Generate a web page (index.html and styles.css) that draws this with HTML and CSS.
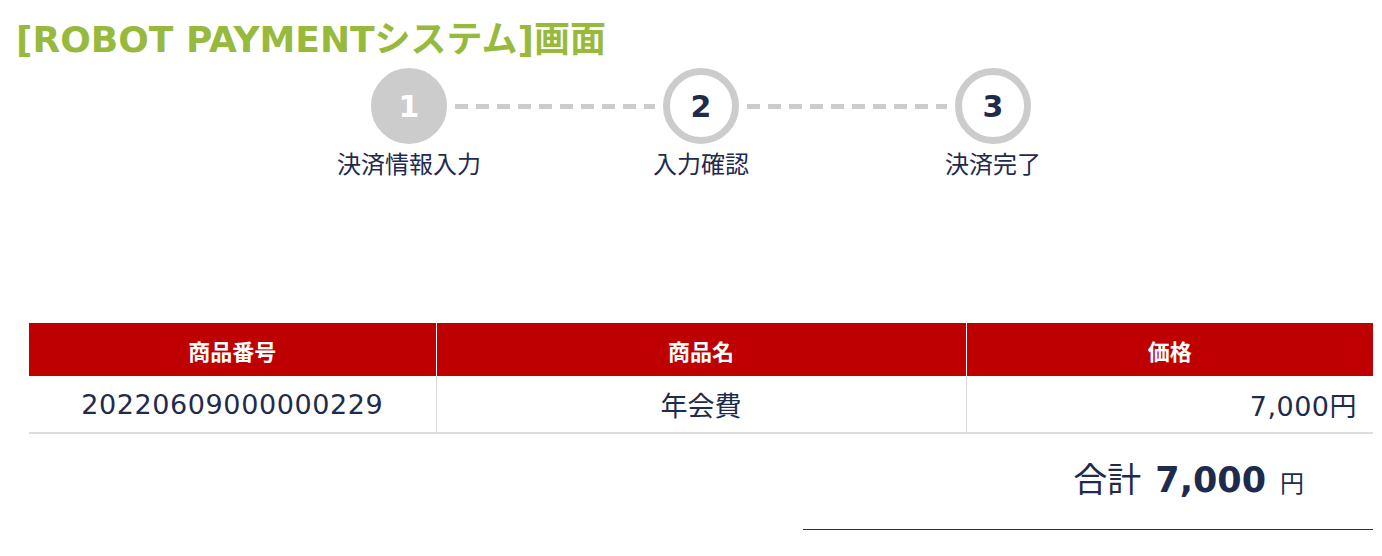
FILE: index.html
```html
<!DOCTYPE html>
<html lang="ja">
<head>
<meta charset="utf-8">
<title>[ROBOT PAYMENTシステム]画面</title>
<link rel="stylesheet" href="styles.css">
</head>
<body>
<h1 class="title">[ROBOT PAYMENTシステム]画面</h1>
<main class="content">
  <ol class="steps">
    <li class="step step--current"><span class="step__num">1</span><span class="step__label">決済情報入力</span></li>
    <li class="step__line" aria-hidden="true"></li>
    <li class="step"><span class="step__num">2</span><span class="step__label">入力確認</span></li>
    <li class="step__line" aria-hidden="true"></li>
    <li class="step"><span class="step__num">3</span><span class="step__label">決済完了</span></li>
  </ol>

  <table class="items">
    <colgroup>
      <col class="items__col-id">
      <col class="items__col-name">
      <col class="items__col-price">
    </colgroup>
    <thead>
      <tr><th>商品番号</th><th>商品名</th><th>価格</th></tr>
    </thead>
    <tbody>
      <tr>
        <td class="items__id">20220609000000229</td>
        <td class="items__name">年会費</td>
        <td class="items__price">7,000円</td>
      </tr>
    </tbody>
  </table>

  <div class="total">
    <span class="total__label">合計</span>
    <span class="total__amount">7,000</span>
    <span class="total__unit">円</span>
  </div>
</main>
</body>
</html>
```

FILE: styles.css
```css
html, body {
  margin: 0;
  padding: 0;
  background: #fff;
}

body {
  font-family: "DejaVu Sans", "Noto Sans CJK JP", sans-serif;
  color: #1f2b4d;
}

.title {
  margin: 19px 0 0 16px;
  font-size: 36px;
  line-height: 42px;
  font-weight: bold;
  color: #98ba3c;
}

.content {
  margin: 0 9px 0 29px;
}

/* steps */
.steps {
  list-style: none;
  margin: 7px 0 0;
  padding: 0;
  display: flex;
  justify-content: center;
}

.step {
  width: 76px;
  display: flex;
  flex-direction: column;
  align-items: center;
}

.step__num {
  box-sizing: border-box;
  width: 76px;
  height: 76px;
  border-radius: 50%;
  border: 7px solid #cccccc;
  background: #fff;
  display: flex;
  align-items: center;
  justify-content: center;
  font-size: 30px;
  font-weight: bold;
  color: #1f2b4d;
}

.step--current .step__num {
  background: #cccccc;
  color: #fff;
}

.step__label {
  margin-top: 6px;
  font-size: 24px;
  line-height: 30px;
  white-space: nowrap;
  color: #1f2b4d;
}

.step__line {
  width: 200px;
  height: 5px;
  margin: 36px 8px 0;
  background: repeating-linear-gradient(90deg, #cccccc 0 13px, transparent 13px 21px);
}

/* table */
.items {
  width: 1344px;
  margin-top: 143px;
  border-collapse: collapse;
  table-layout: fixed;
}

.items__col-id { width: 407px; }
.items__col-name { width: 530px; }
.items__col-price { width: 407px; }

.items th {
  height: 53px;
  padding: 0;
  background: #bf0000;
  color: #fff;
  font-size: 22px;
  font-weight: bold;
  text-align: center;
}

.items th + th {
  border-left: 1px solid #fff;
}

.items td {
  height: 56px;
  padding: 0;
  font-size: 27px;
  color: #1f2b4d;
  border-bottom: 2px solid #dddddd;
  text-align: center;
}

.items td + td {
  border-left: 1px solid #dddddd;
}

.items .items__id {
  letter-spacing: 0.6px;
}

.items .items__price {
  text-align: right;
  padding-right: 16px;
  letter-spacing: 0.5px;
}

/* total */
.total {
  width: 570px;
  margin: 22px 0 0 auto;
  box-sizing: border-box;
  padding: 0 69px 21px 0;
  border-bottom: 1px solid #333;
  display: flex;
  justify-content: flex-end;
  align-items: baseline;
  line-height: 48px;
  color: #1f2b4d;
}

.total__label {
  font-size: 34px;
  margin-right: 14px;
}

.total__amount {
  font-size: 35px;
  font-weight: bold;
  margin-right: 14px;
}

.total__unit {
  font-size: 24px;
}
```
